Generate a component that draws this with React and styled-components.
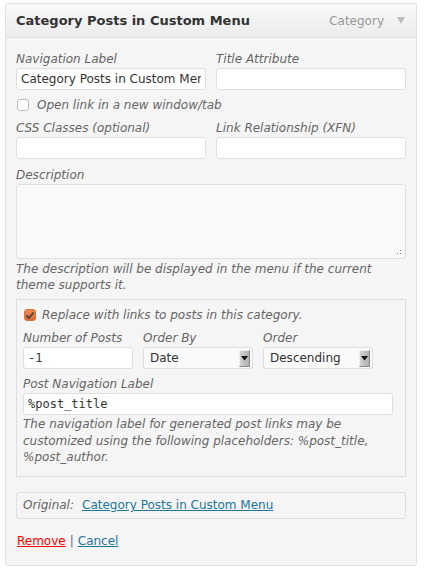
import React from 'react'
import styled, { createGlobalStyle } from 'styled-components'

const GlobalStyle = createGlobalStyle`
  html, body {
    margin: 0;
    padding: 0;
    background: #fff;
  }
  body {
    font-family: "DejaVu Sans", sans-serif;
    font-size: 12px;
    color: #333;
  }
`

function Field({ label, children, width, full }) {
  return (
    <FieldWrap width={width} full={full}>
      <Label>{label}</Label>
      {children}
    </FieldWrap>
  )
}

function Select({ value }) {
  return (
    <SelectBox>
      <SelectText>{value}</SelectText>
      <SelectArrow>
        <svg width="7" height="5" viewBox="0 0 7 5">
          <path d="M0 0 L7 0 L3.5 4.5 Z" fill="#111" />
        </svg>
      </SelectArrow>
    </SelectBox>
  )
}

export default function App() {
  return (
    <>
      <GlobalStyle />
      <Page>
        <Panel>
          <Header>
            <Title>Category Posts in Custom Menu</Title>
            <ItemType>
              Category
              <svg width="8" height="7" viewBox="0 0 8 7">
                <path d="M0 0 L8 0 L4 7 Z" fill="#bbb" />
              </svg>
            </ItemType>
          </Header>
          <Body>
            <Row>
              <Field label="Navigation Label">
                <TextInput defaultValue="Category Posts in Custom Menu" />
              </Field>
              <Field label="Title Attribute">
                <TextInput />
              </Field>
            </Row>
            <CheckRow>
              <Check />
              <Italic>Open link in a new window/tab</Italic>
            </CheckRow>
            <Row gapBelow="8px">
              <Field label="CSS Classes (optional)">
                <TextInput />
              </Field>
              <Field label="Link Relationship (XFN)">
                <TextInput />
              </Field>
            </Row>
            <Field label="Description" full>
              <AreaWrap>
                <TextArea />
                <Grip>
                  <svg width="5" height="5" viewBox="0 0 5 5">
                    <rect x="3" y="0" width="1" height="1" fill="#777" />
                    <rect x="0" y="3" width="1" height="1" fill="#777" />
                    <rect x="3" y="3" width="1" height="1" fill="#777" />
                  </svg>
                </Grip>
              </AreaWrap>
            </Field>
            <Help>The description will be displayed in the menu if the current theme supports it.</Help>

            <InnerBox>
              <CheckRow tight>
                <Check checked>
                  <svg width="10" height="9" viewBox="0 0 10 9">
                    <path d="M1.5 4.5 L4 7 L8.5 1.5" stroke="#444" strokeWidth="1.8" fill="none" />
                  </svg>
                </Check>
                <Italic>Replace with links to posts in this category.</Italic>
              </CheckRow>
              <Row gapBelow="7px">
                <Field label="Number of Posts" width="110px">
                  <TextInput defaultValue="-1" mono />
                </Field>
                <Field label="Order By" width="110px">
                  <Select value="Date" />
                </Field>
                <Field label="Order" width="110px">
                  <Select value="Descending" />
                </Field>
              </Row>
              <Field label="Post Navigation Label" width="370px">
                <TextInput defaultValue="%post_title" mono />
              </Field>
              <Help tight>
                The navigation label for generated post links may be customized using the following placeholders:
                %post_title, %post_author.
              </Help>
            </InnerBox>

            <OriginalBox>
              <Italic>Original:</Italic>
              <Link href="#">Category Posts in Custom Menu</Link>
            </OriginalBox>

            <Actions>
              <Link href="#" danger>Remove</Link>
              <Sep>|</Sep>
              <Link href="#">Cancel</Link>
            </Actions>
          </Body>
        </Panel>
      </Page>
    </>
  )
}

const Page = styled.div`
  padding: 3px 0 0 5px;
  width: 412px;
`

const Panel = styled.div`
  border: 1px solid #dfdfdf;
  border-radius: 3px;
  background: #f5f5f5;
  overflow: hidden;
`

const Header = styled.div`
  height: 33px;
  display: flex;
  align-items: center;
  justify-content: space-between;
  padding: 0 11px 0 10px;
  border-bottom: 1px solid #dfdfdf;
  background: linear-gradient(to bottom, #f9f9f9, #ececec);
`

const Title = styled.div`
  font-weight: bold;
  font-size: 13px;
  color: #333;
`

const ItemType = styled.div`
  display: flex;
  align-items: center;
  gap: 13px;
  color: #999;
  font-size: 12px;
`

const Body = styled.div`
  padding: 13px 10px 17px 10px;
  display: flex;
  flex-direction: column;
`

const Row = styled.div`
  display: flex;
  gap: 10px;
  margin-bottom: ${p => p.gapBelow || '0'};
`

const FieldWrap = styled.div`
  display: flex;
  flex-direction: column;
  width: ${p => (p.full ? '100%' : p.width || '190px')};
`

const Label = styled.div`
  font-style: italic;
  color: #666;
  font-size: 12px;
  line-height: 16px;
  margin-bottom: 1px;
`

const TextInput = styled.input`
  box-sizing: border-box;
  width: 100%;
  height: 22px;
  border: 1px solid #dfdfdf;
  border-radius: 3px;
  background: #fff;
  padding: 0 4px;
  font-family: ${p => (p.mono ? '"DejaVu Sans Mono", monospace' : '"DejaVu Sans", sans-serif')};
  font-size: 12px;
  color: #333;
  outline: none;
`

const AreaWrap = styled.div`
  position: relative;
`

const TextArea = styled.textarea`
  box-sizing: border-box;
  width: 100%;
  height: 75px;
  border: 1px solid #dfdfdf;
  border-radius: 3px;
  background: #f9f9f9;
  resize: none;
  display: block;
  outline: none;
`

const Grip = styled.span`
  position: absolute;
  right: 4px;
  bottom: 4px;
  display: flex;
`

const CheckRow = styled.label`
  display: flex;
  align-items: center;
  gap: ${p => (p.tight ? '6px' : '8px')};
  height: 16px;
  margin: 7px 0 7px 1px;
`

const Check = styled.span`
  box-sizing: border-box;
  width: 12px;
  height: 12px;
  border: 1px solid ${p => (p.checked ? '#d9703a' : '#bbb')};
  border-radius: 3px;
  background: ${p => (p.checked ? 'linear-gradient(to bottom, #f08a50, #e2692e)' : '#fff')};
  display: flex;
  align-items: center;
  justify-content: center;
`

const Italic = styled.span`
  font-style: italic;
  color: #666;
  font-size: 12px;
`

const Help = styled.p`
  margin: ${p => (p.tight ? '1px' : '2px')} 0 0 0;
  font-style: italic;
  color: #666;
  font-size: 12px;
  line-height: ${p => (p.tight ? '16.5px' : '16px')};
`

const InnerBox = styled.div`
  margin-top: 6px;
  border: 1px solid #dfdfdf;
  padding: 0 6px 10px 6px;
  display: flex;
  flex-direction: column;
`

const SelectBox = styled.div`
  box-sizing: border-box;
  height: 22px;
  border: 1px solid #dfdfdf;
  border-radius: 3px;
  background: #fafafa;
  display: flex;
  align-items: center;
  justify-content: space-between;
  padding: 0 2px 0 6px;
`

const SelectText = styled.span`
  font-size: 12px;
  color: #333;
`

const SelectArrow = styled.span`
  box-sizing: border-box;
  width: 11px;
  height: 17px;
  background: linear-gradient(to right, #d4d4d4, #b0b0b0);
  border: 1px solid #888;
  border-top-color: #eee;
  border-left-color: #eee;
  display: flex;
  align-items: center;
  justify-content: center;
`

const OriginalBox = styled.div`
  margin-top: 15px;
  box-sizing: border-box;
  height: 27px;
  border: 1px solid #dfdfdf;
  border-radius: 3px;
  display: flex;
  align-items: center;
  gap: 8px;
  padding: 0 6px;
  font-size: 12px;
`

const Link = styled.a`
  color: ${p => (p.danger ? '#f00' : '#21759b')};
  font-size: 12px;
  text-decoration: underline;
`

const Actions = styled.div`
  margin-top: 15px;
  display: flex;
  align-items: center;
  gap: 4px;
  padding-left: 1px;
`

const Sep = styled.span`
  color: #666;
  font-size: 12px;
`
